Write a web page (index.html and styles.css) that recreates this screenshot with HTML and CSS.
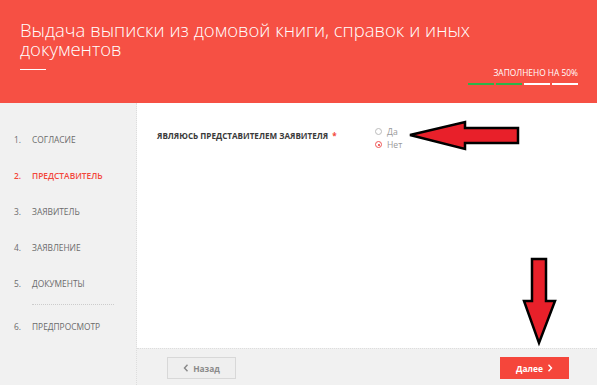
FILE: index.html
```html
<!DOCTYPE html>
<html lang="ru">
<head>
<meta charset="utf-8">
<link rel="stylesheet" href="styles.css">
</head>
<body>
<div class="page">
  <header class="header">
    <div class="title-block">
      <h1 class="title">Выдача выписки из домовой книги, справок и иных документов</h1>
      <div class="title-line"></div>
    </div>
    <div class="progress">
      <div class="progress-label">ЗАПОЛНЕНО НА 50%</div>
      <div class="progress-bars">
        <span class="seg done"></span><span class="seg done"></span><span class="seg"></span><span class="seg"></span>
      </div>
    </div>
  </header>
  <div class="body">
    <nav class="sidebar">
      <div class="step"><span class="num">1.</span><span>СОГЛАСИЕ</span></div>
      <div class="step active"><span class="num">2.</span><span>ПРЕДСТАВИТЕЛЬ</span></div>
      <div class="step"><span class="num">3.</span><span>ЗАЯВИТЕЛЬ</span></div>
      <div class="step"><span class="num">4.</span><span>ЗАЯВЛЕНИЕ</span></div>
      <div class="step"><span class="num">5.</span><span>ДОКУМЕНТЫ</span></div>
      <div class="divider"></div>
      <div class="step"><span class="num">6.</span><span>ПРЕДПРОСМОТР</span></div>
    </nav>
    <main class="main">
      <div class="content">
        <div class="field">
          <div class="field-label">ЯВЛЯЮСЬ ПРЕДСТАВИТЕЛЕМ ЗАЯВИТЕЛЯ <span class="req">*</span></div>
          <div class="radios">
            <label class="radio"><span class="circle"></span>Да</label>
            <label class="radio"><span class="circle checked"></span>Нет</label>
          </div>
        </div>
      </div>
      <div class="footer">
        <button class="btn btn-back"><svg width="6" height="8" viewBox="0 0 6 8"><path d="M4.5 0.8 L1.5 4 L4.5 7.2" fill="none" stroke="#888" stroke-width="1.4"/></svg>Назад</button>
        <button class="btn btn-next">Далее<svg width="6" height="8" viewBox="0 0 6 8"><path d="M1.5 0.8 L4.5 4 L1.5 7.2" fill="none" stroke="#fff" stroke-width="1.4"/></svg></button>
      </div>
    </main>
  </div>
  <svg class="arrow-left" width="116" height="32" viewBox="0 0 116 32">
    <polygon points="2,15 57,2 57,8 110,8 110,23 57,23 57,29" fill="#e8202a" stroke="#000" stroke-width="2.5" stroke-linejoin="miter"/>
  </svg>
  <svg class="arrow-down" width="38" height="90" viewBox="0 0 38 90">
    <polygon points="11,2 25,2 25,44 34,44 18,86 3,44 11,44" fill="#e8202a" stroke="#000" stroke-width="2.5" stroke-linejoin="miter"/>
  </svg>
</div>
</body>
</html>
```
FILE: styles.css
```css
* { box-sizing: border-box; }
html, body { margin: 0; padding: 0; background: #fff; }
body { font-family: "Open Sans", "Liberation Sans", sans-serif; }
.page { position: relative; width: 597px; height: 385px; overflow: hidden; }

.header {
  height: 103px;
  background: #f65044;
  display: flex;
  justify-content: space-between;
  padding: 20px 19px 0 20px;
}
.title-block { flex: none; width: 440px; }
.title {
  margin: 0;
  font-weight: 300;
  font-size: 18.5px;
  line-height: 19px;
  color: #fff;
  width: 490px;
}
.title-line { width: 26px; height: 1px; background: #fff; margin-top: 11px; }
.progress { flex: none; margin-top: 47px; display: flex; flex-direction: column; align-items: flex-end; }
.progress-label { color: #fff; font-size: 8.4px; line-height: 11px; white-space: nowrap; }
.progress-bars { display: flex; gap: 2px; margin-top: 5px; }
.seg { display: block; width: 26px; height: 2px; background: #fff; }
.seg.done { background: #2bb34a; }

.body { display: flex; height: 282px; }
.sidebar {
  width: 137px;
  background: #f1f1f1;
  border-right: 1px dotted #ddd;
  padding-top: 18px;
}
.step {
  display: flex;
  height: 36px;
  align-items: center;
  font-size: 8.4px;
  color: #6b6b6b;
  padding-left: 14px;
}
.step .num { width: 18px; }
.step.active { color: #f3473b; font-weight: 600; }
.divider { margin: 3px 22px 0 32px; border-top: 1px dotted #ccc; height: 4px; }

.main { flex: 1; display: flex; flex-direction: column; }
.content { flex: 1; padding: 22px 20px 0 20px; }
.field { display: flex; }
.field-label {
  width: 218px;
  font-size: 8.1px;
  font-weight: 700;
  color: #3a3a3a;
  padding-top: 5px;
}
.req { color: #f3473b; margin-left: 2px; }
.radios { display: flex; flex-direction: column; }
.radio { display: flex; align-items: center; font-size: 8.6px; color: #999; height: 13px; }
.circle { width: 7px; height: 7px; border: 1px solid #bbb; border-radius: 50%; margin-right: 5px; position: relative; background: #fff; }
.circle.checked { border-color: #e55; }
.circle.checked::after { content: ""; position: absolute; left: 1.5px; top: 1.5px; width: 2px; height: 2px; border-radius: 50%; background: #e33; }

.footer {
  height: 37px;
  background: #f1f1f1;
  border-top: 1px dotted #ddd;
  display: flex;
  justify-content: space-between;
  align-items: center;
  padding: 0 28px 0 30px;
}
.btn {
  height: 22px;
  width: 69px;
  font-family: "Open Sans", "Liberation Sans", sans-serif;
  font-size: 8.4px;
  font-weight: 700;
  display: flex;
  align-items: center;
  justify-content: center;
  gap: 4px;
  padding: 0;
  margin-top: 2px;
}
.btn-back { background: #efefef; border: 1px solid #d8d8d8; color: #8a8a8a; }
.btn-next { background: #f5463b; border: none; color: #fff; }

.arrow-left { position: absolute; left: 408px; top: 120px; }
.arrow-down { position: absolute; left: 521px; top: 257px; }
```
